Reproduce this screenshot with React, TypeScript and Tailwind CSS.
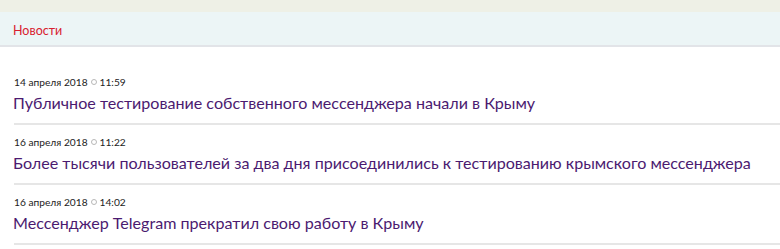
import React from "react";

const items = [
  { date: "14 апреля 2018", time: "11:59", title: "Публичное тестирование собственного мессенджера начали в Крыму" },
  { date: "16 апреля 2018", time: "11:22", title: "Более тысячи пользователей за два дня присоединились к тестированию крымского мессенджера" },
  { date: "16 апреля 2018", time: "14:02", title: "Мессенджер Telegram прекратил свою работу в Крыму" },
];

export default function App() {
  return (
    <div className="w-[780px] h-[249px] overflow-hidden bg-white" style={{ fontFamily: 'Lato, "Open Sans", sans-serif' }}>
      <div className="h-[12px] bg-[#eef0e6]" />
      <div className="h-[35px] bg-[#ecf5f6] border-b-2 border-[#e2e4e8] flex items-center pl-[13px] pt-[5px]">
        <span className="text-[12.5px] text-[#d8202f]">Новости</span>
      </div>
      <div className="pt-[18px] pl-[14px]">
        {items.map((it, i) => (
          <div key={i} className="h-[60px] border-b-2 border-[#e6e6e6] flex flex-col">
            <div className="mt-[10px] h-[14px] flex items-center text-[10.2px] text-[#222] leading-none">
              <span>{it.date}</span>
              <span className="mx-[3px] inline-block w-[6px] h-[6px] rounded-full border border-[#b8b8b8]" />
              <span>{it.time}</span>
            </div>
            <div className="-ml-[1px] mt-[4px] text-[16.1px] leading-[20px] text-[#4b1a70] whitespace-nowrap">{it.title}</div>
          </div>
        ))}
      </div>
    </div>
  );
}
